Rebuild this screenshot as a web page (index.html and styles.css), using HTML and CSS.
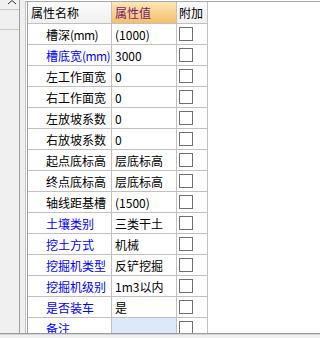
FILE: index.html
```html
<!DOCTYPE html>
<html lang="zh">
<head>
<meta charset="utf-8">
<link rel="stylesheet" href="styles.css">
</head>
<body>
<div class="screen">
  <div class="side">
    <div class="side-top">
      <svg class="chev" width="10" height="5" viewBox="0 0 10 5"><polyline points="1,4 5,0.5 9,4" fill="none" stroke="#333" stroke-width="1"/></svg>
    </div>
    <div class="side-item"></div>
  </div>
  <div class="gap"></div>
  <div class="panel">
    <div class="title"><span class="title-text">属性编辑框</span></div>
    <div class="grid-wrap">
      <div class="grid">
        <div class="cell head name">属性名称</div>
        <div class="cell head val">属性值</div>
        <div class="cell head add">附加</div>

        <div class="cell name lbl">槽深<span class="unit">(mm)</span></div><div class="cell val">(1000)</div><div class="cell add"><span class="cb"></span></div>
        <div class="cell name lbl blue">槽底宽<span class="unit">(mm)</span></div><div class="cell val">3000</div><div class="cell add"><span class="cb"></span></div>
        <div class="cell name lbl">左工作面宽</div><div class="cell val">0</div><div class="cell add"><span class="cb"></span></div>
        <div class="cell name lbl">右工作面宽</div><div class="cell val">0</div><div class="cell add"><span class="cb"></span></div>
        <div class="cell name lbl">左放坡系数</div><div class="cell val">0</div><div class="cell add"><span class="cb"></span></div>
        <div class="cell name lbl">右放坡系数</div><div class="cell val">0</div><div class="cell add"><span class="cb"></span></div>
        <div class="cell name lbl">起点底标高</div><div class="cell val">层底标高</div><div class="cell add"><span class="cb"></span></div>
        <div class="cell name lbl">终点底标高</div><div class="cell val">层底标高</div><div class="cell add"><span class="cb"></span></div>
        <div class="cell name lbl">轴线距基槽</div><div class="cell val">(1500)</div><div class="cell add"><span class="cb"></span></div>
        <div class="cell name lbl blue">土壤类别</div><div class="cell val">三类干土</div><div class="cell add"><span class="cb"></span></div>
        <div class="cell name lbl blue">挖土方式</div><div class="cell val">机械</div><div class="cell add"><span class="cb"></span></div>
        <div class="cell name lbl blue">挖掘机类型</div><div class="cell val">反铲挖掘</div><div class="cell add"><span class="cb"></span></div>
        <div class="cell name lbl blue">挖掘机级别</div><div class="cell val">1m3以内</div><div class="cell add"><span class="cb"></span></div>
        <div class="cell name lbl blue">是否装车</div><div class="cell val">是</div><div class="cell add"><span class="cb"></span></div>
        <div class="cell name lbl blue">备注</div><div class="cell val sel"></div><div class="cell add"><span class="cb"></span></div>
      </div>
    </div>
  </div>
</div>
<div class="bottom"></div>
</body>
</html>
```

FILE: styles.css
```css
html, body {
  margin: 0;
  padding: 0;
  background: #f0f0f0;
  font-family: "Noto Sans CJK SC", "Liberation Sans", sans-serif;
  font-size: 12px;
  color: #000;
}

.screen {
  display: flex;
  height: 333px;
  overflow: hidden;
}

.side {
  width: 19px;
  border-right: 1px solid #a0a0a0;
  background: #f0f0f0;
  display: flex;
  flex-direction: column;
}

.side-top {
  height: 9px;
  display: flex;
  justify-content: flex-end;
  align-items: flex-start;
}

.chev {
  display: block;
  margin-right: 2px;
}

.side-item {
  height: 19px;
  border-top: 1px solid #c8c8c8;
  border-bottom: 1px solid #c8c8c8;
  background: #f0f0f0;
}

.gap {
  width: 5px;
  background: #f0f0f0;
}

.panel {
  flex: 1;
  display: flex;
  flex-direction: column;
  background: #fff;
  min-width: 0;
}

.title {
  height: 7px;
  background: #0a44d6;
  overflow: hidden;
  border-bottom: 1px solid #ffffff;
}

.title-text {
  display: block;
  color: #fff;
  line-height: 12px;
  margin-top: -6px;
  padding-left: 2px;
}

.grid-wrap {
  flex: 1;
  border-top: 1px solid #a8a8a8;
  border-left: 1px solid #c4c4c4;
  padding-left: 1px;
  background: #fff;
}

.grid {
  display: grid;
  grid-template-columns: 84px 65px 31px;
  grid-template-rows: 22px;
  grid-auto-rows: 21px;
  border-left: 1px solid #a0a0a0;
  width: 180px;
}

.cell {
  box-sizing: border-box;
  border-right: 1px solid #c0c0c0;
  border-bottom: 1px solid #c0c0c0;
  display: flex;
  align-items: center;
  white-space: nowrap;
  overflow: hidden;
}

.head {
  background: linear-gradient(#fbfbfb, #f0f0f0);
}

.head.name {
  padding-left: 3px;
}

.head.val {
  padding-left: 1px;
  color: #7a1a6e;
  background: linear-gradient(#fde6b6, #f4bf6a);
}

.head.add {
  padding-left: 1px;
}

.lbl {
  padding-left: 18px;
}

.unit {
  letter-spacing: -0.6px;
}

.blue {
  color: #0000ff;
}

.cell.val {
  padding-left: 3px;
}

.cell.val.sel {
  background: #dde9f9;
}

.cell.add {
  padding-left: 2px;
}

.cb {
  display: block;
  width: 12px;
  height: 12px;
  border: 1px solid #707070;
  background: #fff;
}

.bottom {
  height: 5px;
  border-top: 1px solid #9a9a9a;
  box-shadow: inset 0 1px 0 #d4d4d4;
  background: #f0f0f0;
}
```
